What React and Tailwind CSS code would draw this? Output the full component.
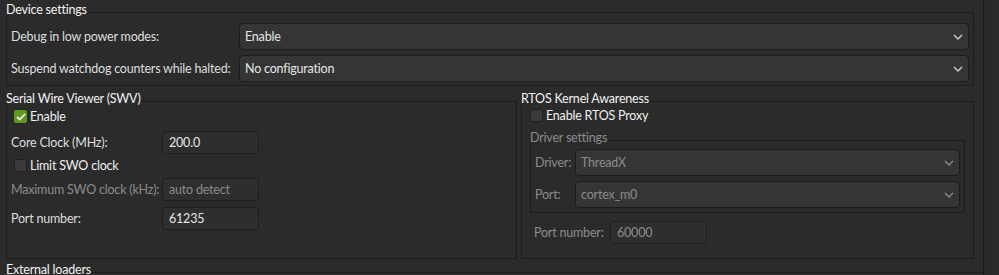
import React from 'react';

const Chevron = ({ dim }) => (
    <svg width="10" height="6" viewBox="0 0 10 6" className={dim ? 'text-[#8a8a8a]' : 'text-[#cfcfcf]'}>
        <path d="M1 1l4 4 4-4" fill="none" stroke="currentColor" strokeWidth="1.4" />
    </svg>
);

function Select({ value, dim, className = '' }) {
    return (
        <div className={`flex h-[27px] items-center justify-between rounded-[4px] border border-[#1d1d1d] bg-[#353535] pl-[5px] pr-[5px] ${dim ? 'text-[#8c8c8c]' : 'text-[#e6e6e6]'} ${className}`}>
            <span>{value}</span>
            <Chevron dim={dim} />
        </div>
    );
}

function Field({ value, placeholder, className = '' }) {
    return (
        <div className={`flex h-[23px] w-[97px] shrink-0 items-center rounded-[4px] border border-[#1d1d1d] bg-[#2e2e2e] pl-[6px] ${placeholder ? 'text-[#8c8c8c]' : 'text-[#e6e6e6]'} ${className}`}>
            {value}
        </div>
    );
}

function Check({ checked, label, dim }) {
    return (
        <div className="flex h-[17px] items-center gap-[3px]">
            {checked ? (
                <span className="flex h-[13px] w-[13px] items-center justify-center rounded-[2px] bg-[#5b9a1d]">
                    <svg width="10" height="8" viewBox="0 0 10 8">
                        <path d="M1 4l2.6 2.6L9 1" fill="none" stroke="#fff" strokeWidth="1.6" />
                    </svg>
                </span>
            ) : (
                <span className="h-[13px] w-[13px] rounded-[2px] border border-[#202020] bg-[#3a3a3a]" />
            )}
            <span className={dim ? 'text-[#8c8c8c]' : 'text-[#f0f0f0]'}>{label}</span>
        </div>
    );
}

function Group({ title, dim, className = '', boxClass = '', children }) {
    return (
        <div className={className}>
            <div className={`relative z-10 w-fit bg-[#2b2b2b] pr-px leading-[15px] ${dim ? 'text-[#8c8c8c]' : 'text-[#f2f2f2]'}`}>{title}</div>
            <div className={`-mt-[5px] border border-[#1c1c1c] ${boxClass}`}>{children}</div>
        </div>
    );
}

export default function App() {
    return (
        <div className="flex h-[275px] w-[999px] overflow-hidden whitespace-nowrap bg-[#2b2b2b] text-[12.5px] leading-[17px] tracking-[-0.2px] text-[#dedede]" style={{ fontFamily: 'Lato, "Liberation Sans", sans-serif' }}>
            <div className="flex w-[974px] shrink-0 flex-col pl-[6px] pt-[2px]">
                <Group title="Device settings" boxClass="flex flex-col gap-[5px] px-[4px] pt-[10px] pb-[3px]">
                    <div className="flex items-center">
                        <span className="w-[228px]">Debug in low power modes:</span>
                        <Select value="Enable" className="flex-1" />
                    </div>
                    <div className="flex items-center">
                        <span className="w-[228px]">Suspend watchdog counters while halted:</span>
                        <Select value="No configuration" className="flex-1" />
                    </div>
                </Group>

                <div className="mt-[5px] flex gap-[4px]">
                    <Group title="Serial Wire Viewer (SWV)" className="w-[511px]" boxClass="h-[158px] px-[4px] pt-[6px]">
                        <div className="pl-[3px]"><Check checked label="Enable" /></div>
                        <div className="mt-[6px] flex items-center">
                            <span className="w-[151px]">Core Clock (MHz):</span>
                            <Field value="200.0" />
                        </div>
                        <div className="mt-[3px] pl-[3px]"><Check label="Limit SWO clock" /></div>
                        <div className="mt-[4px] flex items-center">
                            <span className="w-[151px] text-[#8c8c8c]">Maximum SWO clock (kHz):</span>
                            <Field value="auto detect" placeholder />
                        </div>
                        <div className="mt-[6px] flex items-center">
                            <span className="w-[151px]">Port number:</span>
                            <Field value="61235" />
                        </div>
                    </Group>

                    <Group title="RTOS Kernel Awareness" className="w-[453px]" boxClass="h-[158px] px-[8px] pt-[5px]">
                        <Check label="Enable RTOS Proxy" />
                        <Group title="Driver settings" dim className="mt-[6px]" boxClass="flex flex-col gap-[5px] pl-[4px] pr-[4px] pt-[8px] pb-[4px]">
                            <div className="flex items-center">
                                <span className="w-[40px] text-[#8c8c8c]">Driver:</span>
                                <Select value="ThreadX" dim className="flex-1" />
                            </div>
                            <div className="flex items-center">
                                <span className="w-[40px] text-[#8c8c8c]">Port:</span>
                                <Select value="cortex_m0" dim className="flex-1" />
                            </div>
                        </Group>
                        <div className="mt-[8px] flex items-center pl-[4px]">
                            <span className="w-[76px] text-[#8c8c8c]">Port number:</span>
                            <Field value="60000" placeholder />
                        </div>
                    </Group>
                </div>

                <Group title="External loaders" className="mt-[3px] w-[977px]" boxClass="h-[20px] border-r-0" />
            </div>
            <div className="ml-[9px] flex h-full w-[16px] shrink-0 border-l border-[#1c1c1c]">
                <div className="w-[3px] border-r border-[#262626]" />
                <div className="w-[4px] border-r border-[#242424]" />
                <div className="w-[4px] border-r border-[#262626]" />
            </div>
        </div>
    );
}
